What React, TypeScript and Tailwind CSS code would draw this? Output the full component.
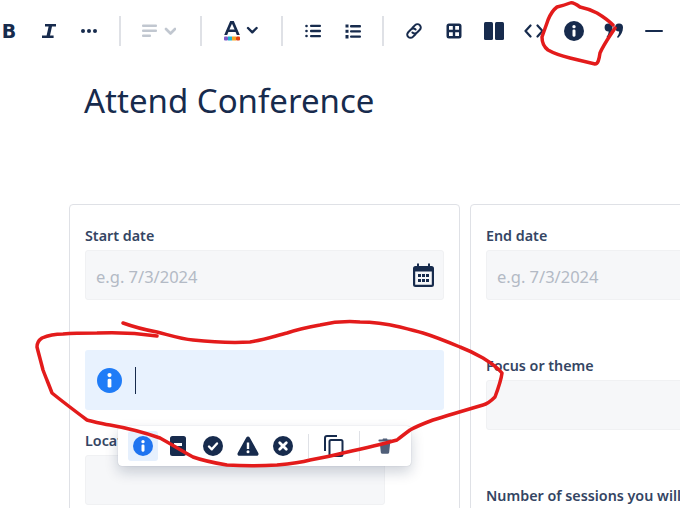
const NAVY = "#172b4d";

const Divider: React.FC = () => <div className="mx-[-1px] h-[30px] w-[2px] shrink-0 bg-[#dfe1e6]" />;

const Tool: React.FC<{ children?: React.ReactNode; className?: string }> = ({ children, className }) => (
    <div className={`flex h-[40px] shrink-0 items-center justify-center ${className ?? "w-[40px]"}`}>{children}</div>
);

const InfoGlyph: React.FC<{ size: number; color: string }> = ({ size, color }) => (
    <svg width={size} height={size} viewBox="0 0 24 24">
        <circle cx="12" cy="12" r="12" fill={color} />
        <circle cx="12" cy="6.8" r="2" fill="#fff" />
        <rect x="10.2" y="10.2" width="3.6" height="8.6" rx="1.4" fill="#fff" />
    </svg>
);

const Toolbar: React.FC = () => (
    <div className="-ml-[11px] flex h-[62px] items-center">
        <Tool>
            <span className="text-[19px] leading-none font-bold text-[#172b4d] [font-family:'DejaVu_Sans',sans-serif]">B</span>
        </Tool>
        <Tool>
            <svg width="16" height="18" viewBox="0 0 16 18" fill={NAVY}>
                <path d="M4 2h11v2.6h-4L9 13.6h3.6V16H1v-2.4h4.6l2-9H4z" />
            </svg>
        </Tool>
        <Tool>
            <svg width="18" height="6" viewBox="0 0 18 6" fill={NAVY}>
                <circle cx="3" cy="3" r="2" />
                <circle cx="9" cy="3" r="2" />
                <circle cx="15" cy="3" r="2" />
            </svg>
        </Tool>
        <div className="w-[11px] shrink-0" />
        <Divider />
        <Tool className="w-[60px] pl-[18px]">
            <svg width="34" height="14" viewBox="0 0 34 14" fill="#c1c7d0">
                <rect x="0" y="0.5" width="15" height="2.6" rx="1" />
                <rect x="0" y="5.5" width="15" height="2.6" rx="1" />
                <rect x="0" y="10.5" width="9" height="2.6" rx="1" />
                <path d="M24 5l4.5 4.5L33 5" fill="none" stroke="#c1c7d0" strokeWidth="2.6" strokeLinecap="round" strokeLinejoin="round" />
            </svg>
        </Tool>
        <div className="w-[21px] shrink-0" />
        <Divider />
        <Tool className="w-[81px] pr-[2px]">
            <svg width="34" height="20" viewBox="0 0 34 20">
                <path d="M6.2 0h3.6l6 14h-3l-1.200-3H4.400l-1.200 3h-3zM5.400 8.600h5.200L8 2.700z" fill={NAVY} />
                <rect x="0" y="15.500" width="4" height="4" rx="1" fill="#7c5ac9" />
                <rect x="4" y="15.500" width="4" height="4" fill="#1fb3d1" />
                <rect x="8" y="15.500" width="4" height="4" fill="#f5a623" />
                <rect x="12" y="15.500" width="4" height="4" rx="1" fill="#e5400f" />
                <path d="M24 7l4.300 4.300L32.600 7" fill="none" stroke={NAVY} strokeWidth="2.400" strokeLinecap="round" strokeLinejoin="round" />
            </svg>
        </Tool>
        <Divider />
        <Tool className="w-[11px]" />
        <Tool>
            <svg width="16" height="14" viewBox="0 0 16 14" fill={NAVY}>
                <circle cx="1.500" cy="2" r="1.300" />
                <circle cx="1.500" cy="7" r="1.300" />
                <circle cx="1.500" cy="12" r="1.300" />
                <rect x="5" y="0.700" width="11" height="2.400" rx="1" />
                <rect x="5" y="5.800" width="11" height="2.400" rx="1" />
                <rect x="5" y="10.900" width="11" height="2.400" rx="1" />
            </svg>
        </Tool>
        <Tool>
            <svg width="16" height="15" viewBox="0 0 16 15" fill={NAVY}>
                <rect x="5" y="1" width="11" height="2.400" rx="1" />
                <rect x="5" y="6.200" width="11" height="2.400" rx="1" />
                <rect x="5" y="11.400" width="11" height="2.400" rx="1" />
                <rect x="0.500" y="0.500" width="3" height="3" />
                <rect x="0.500" y="5.800" width="3" height="3" />
                <rect x="0.500" y="11" width="3" height="3.500" />
            </svg>
        </Tool>
        <div className="w-[10px] shrink-0" />
        <Divider />
        <Tool className="w-[11px]" />
        <Tool>
            <svg width="18" height="18" viewBox="0 0 18 18" fill="none" stroke={NAVY} strokeWidth="2" strokeLinecap="round">
                <path d="M7.500 5.800l2.600-2.700a3.300 3.300 0 0 1 4.700 4.700l-2.700 2.700a3.300 3.300 0 0 1-4.700 0" />
                <path d="M10.500 12.200l-2.600 2.700a3.300 3.300 0 0 1-4.700-4.700l2.700-2.700a3.300 3.300 0 0 1 4.700 0" />
            </svg>
        </Tool>
        <Tool>
            <svg width="16" height="16" viewBox="0 0 16 16" fill={NAVY} fillRule="evenodd">
                <path d="M3 0.500h10A2.500 2.500 0 0 1 15.500 3v10a2.500 2.500 0 0 1-2.500 2.500H3A2.500 2.500 0 0 1 0.500 13V3A2.500 2.500 0 0 1 3 0.500zM3 3v3.800h3.800V3zM9.200 3v3.800H13V3zM3 9.200V13h3.800V9.200zM9.200 9.200V13H13V9.200z" />
            </svg>
        </Tool>
        <Tool>
            <svg width="20" height="18" viewBox="0 0 20 18" fill={NAVY}>
                <rect x="0" y="0" width="9" height="18" rx="1.500" />
                <rect x="11" y="0" width="9" height="18" rx="1.500" />
            </svg>
        </Tool>
        <Tool>
            <svg width="20" height="14" viewBox="0 0 20 14" fill="none" stroke={NAVY} strokeWidth="2.200" strokeLinecap="round" strokeLinejoin="round">
                <path d="M6.500 1.500L1.500 7l5 5.500" />
                <path d="M13.500 1.500l5 5.500-5 5.500" />
            </svg>
        </Tool>
        <Tool>
            <InfoGlyph size={20} color={NAVY} />
        </Tool>
        <Tool>
            <svg width="20" height="16" viewBox="0 0 20 16" fill={NAVY}>
                <path d="M4.500 0.500a4 4 0 0 1 4 4c0 4-2 8-5 10.500l-1-1c1.200-1.600 2-3.300 2.200-5.500A4 4 0 0 1 4.500 0.500z" />
                <path d="M15 0.500a4 4 0 0 1 4 4c0 4-2 8-5 10.500l-1-1c1.200-1.600 2-3.300 2.200-5.500A4 4 0 0 1 15 0.500z" />
            </svg>
        </Tool>
        <Tool>
            <div className="h-[2.500px] w-[18px] rounded-full bg-[#172b4d]" />
        </Tool>
    </div>
);

const Label: React.FC<{ children: React.ReactNode }> = ({ children }) => (
    <div className="h-[20px] text-[14.3px] leading-[20px] font-semibold text-[#344563]">{children}</div>
);

const Field: React.FC<{ placeholder?: string; className?: string; children?: React.ReactNode }> = ({
    placeholder,
    className,
    children,
}) => (
    <div
        className={`mt-[4px] flex h-[50px] items-center justify-between rounded-[3px] border border-[#f0f1f3] bg-[#f6f7f9] pr-[8px] pl-[10px] text-[16.500px] text-[#b3bac5] ${className ?? ""}`}
    >
        <span className="pt-[4px]">{placeholder}</span>
        {children}
    </div>
);

const CalendarIcon: React.FC = () => (
    <svg width="23" height="24" viewBox="0 0 23 24" fill={NAVY} fillRule="evenodd">
        <path d="M5 0.500h2v2.500h9V0.500h2V3h1.500A2.500 2.500 0 0 1 22 5.500v16a2.500 2.500 0 0 1-2.500 2.500h-16A2.500 2.500 0 0 1 1 21.500v-16A2.500 2.500 0 0 1 3.500 3H5zM3.200 8.500v13.300h16.600V8.500z" />
        <rect x="6" y="11" width="3" height="3" />
        <rect x="10" y="11" width="3" height="3" />
        <rect x="14" y="11" width="3" height="3" />
        <rect x="6" y="16" width="3" height="3" />
        <rect x="10" y="16" width="3" height="3" />
        <rect x="14" y="16" width="3" height="3" />
    </svg>
);

const PanelToolbar: React.FC = () => (
    <div className="absolute top-[76px] left-[33px] flex h-[40px] w-[293px] items-center gap-[5px] rounded-[4px] bg-white pl-[10px] shadow-[0_6px_14px_rgba(9,30,66,0.2),0_0_1px_rgba(9,30,66,0.3)]">
        <div className="flex h-[30px] w-[30px] items-center justify-center rounded-[3px] bg-[#e6f0fd]">
            <InfoGlyph size={20} color="#1f74f0" />
        </div>
        <div className="flex h-[30px] w-[30px] items-center justify-center">
            <svg width="16" height="20" viewBox="0 0 16 20" fill={NAVY} fillRule="evenodd">
                <path d="M2.500 0h11A2.500 2.500 0 0 1 16 2.500v15a2.500 2.500 0 0 1-2.500 2.500h-11A2.500 2.500 0 0 1 0 17.500v-15A2.500 2.500 0 0 1 2.500 0zM4 7v3h8V7z" />
            </svg>
        </div>
        <div className="flex h-[30px] w-[30px] items-center justify-center">
            <svg width="20" height="20" viewBox="0 0 20 20">
                <circle cx="10" cy="10" r="10" fill={NAVY} />
                <path d="M6 10.500l2.800 2.800L14 7.500" fill="none" stroke="#fff" strokeWidth="2.400" strokeLinecap="round" strokeLinejoin="round" />
            </svg>
        </div>
        <div className="flex h-[30px] w-[30px] items-center justify-center">
            <svg width="22" height="20" viewBox="0 0 22 20" fill={NAVY} fillRule="evenodd">
                <path d="M11 0.500c.7 0 1.300.4 1.700 1l8.600 15.500c.7 1.300-.2 2.700-1.600 2.700H2.300c-1.400 0-2.300-1.400-1.600-2.700L9.300 1.500c.4-.6 1-1 1.700-1zM9.800 6.500v6.500h2.400V6.500zM11 14.200a1.500 1.500 0 1 0 0 3 1.500 1.500 0 0 0 0-3z" />
            </svg>
        </div>
        <div className="flex h-[30px] w-[30px] items-center justify-center">
            <svg width="20" height="20" viewBox="0 0 20 20">
                <circle cx="10" cy="10" r="10" fill={NAVY} />
                <path d="M6.700 6.700l6.600 6.600M13.300 6.700l-6.600 6.600" stroke="#fff" strokeWidth="2.800" strokeLinecap="round" />
            </svg>
        </div>
        <div className="ml-[5px] h-[24px] w-px bg-[#dfe1e6]" />
        <div className="-mx-[5px] flex h-[30px] w-[50px] items-center justify-center">
            <svg width="20" height="22" viewBox="0 0 20 22" fill="none" stroke={NAVY} strokeWidth="2">
                <path d="M13 1H3a2 2 0 0 0-2 2v13" />
                <rect x="5.500" y="5" width="13" height="16" rx="1.500" />
            </svg>
        </div>
        <div className="h-[30px] w-px bg-[#dfe1e6]" />
        <div className="-ml-[5px] flex h-[30px] w-[50px] items-center justify-center">
            <svg width="14" height="16" viewBox="0 0 16 20" fill="#505f79">
                <path d="M5.500 0.500h5l.6 1.500H15a1 1 0 0 1 0 2.500H1A1 1 0 0 1 1 2h3.900z" />
                <path d="M1.500 6h13l-1.300 12a2 2 0 0 1-2 1.700H4.800a2 2 0 0 1-2-1.700z" />
            </svg>
        </div>
    </div>
);

const Annotations: React.FC = () => (
    <svg className="pointer-events-none absolute inset-0" width="680" height="508" viewBox="0 0 680 508" fill="none" stroke="#e31b1b" strokeWidth="3.500" strokeLinecap="round" strokeLinejoin="round">
        <path d="M613 25C608 20 602 16 597 13C591 10 585 8 580 7C576 4 572 2 570 3C565 5 561 6 557 7C553 10 550 15 548 20C546 26 544 31 542 37C542 43 544 47 548 50C555 54 562 56 570 58C578 60 587 62 595 64C598 64 599 60 600 53C604 44 610 36 615 28" />
        <path d="M123 323C134 327 146 330 157 332C169 335 181 339 193 340C212 342 231 343 250 342C263 340 275 336 287 333C298 329 309 327 320 325C333 322 347 321 360 322C374 322 387 324 400 327C408 329 416 331 423 333C436 337 448 342 460 347C468 350 476 354 483 358C491 363 498 368 502 373C501 381 498 389 495 397C491 401 487 404 483 405C466 410 449 415 433 420C425 423 417 426 410 430C406 433 402 436 397 440C379 445 361 449 343 453C332 456 321 458 310 460C299 463 288 464 277 465C260 466 244 466 227 465C215 463 204 461 193 457C182 451 171 444 160 438C143 432 127 428 110 425C102 424 95 422 87 420C75 411 63 402 52 393C49 385 46 378 43 370C41 362 39 355 37 347C37 343 39 340 42 338C49 335 56 334 63 334C74 333 86 333 97 333C117 332 137 333 157 336" />
    </svg>
);

const App: React.FC = () => {
    return (
        <div className="relative h-[508px] w-[680px] overflow-hidden bg-white text-[#172b4d] [font-family:'Noto_Sans',sans-serif]">
            <Toolbar />
            <h1 className="mt-[16px] ml-[84px] h-[46px] text-[33px] leading-[46px] font-normal tracking-normal">Attend Conference</h1>
            <div className="mt-[80px] ml-[69px] flex gap-[10px]">
                <div className="h-[330px] w-[391px] shrink-0 rounded-[4px] border border-[#dfe1e6] px-[15px] pt-[21px]">
                    <Label>Start date</Label>
                    <Field placeholder="e.g. 7/3/2024">
                        <CalendarIcon />
                    </Field>
                    <div className="relative mt-[50px]">
                        <div className="flex h-[60px] items-center rounded-[3px] bg-[#e8f2fe] pl-[12px]">
                            <InfoGlyph size={25} color="#1f7cf7" />
                            <div className="ml-[13px] h-[27px] w-px bg-[#172b4d]" />
                        </div>
                        <PanelToolbar />
                    </div>
                    <div className="mt-[21px]">
                        <Label>Location</Label>
                        <Field className="w-[300px]" />
                    </div>
                </div>
                <div className="h-[330px] w-[400px] shrink-0 rounded-[4px] border border-[#dfe1e6] px-[15px] pt-[21px]">
                    <Label>End date</Label>
                    <Field placeholder="e.g. 7/3/2024" />
                    <div className="mt-[56px]">
                        <Label>Focus or theme</Label>
                        <Field />
                    </div>
                    <div className="mt-[56px] whitespace-nowrap">
                        <Label>Number of sessions you will</Label>
                    </div>
                </div>
            </div>
            <Annotations />
        </div>
    );
};

export default App;
